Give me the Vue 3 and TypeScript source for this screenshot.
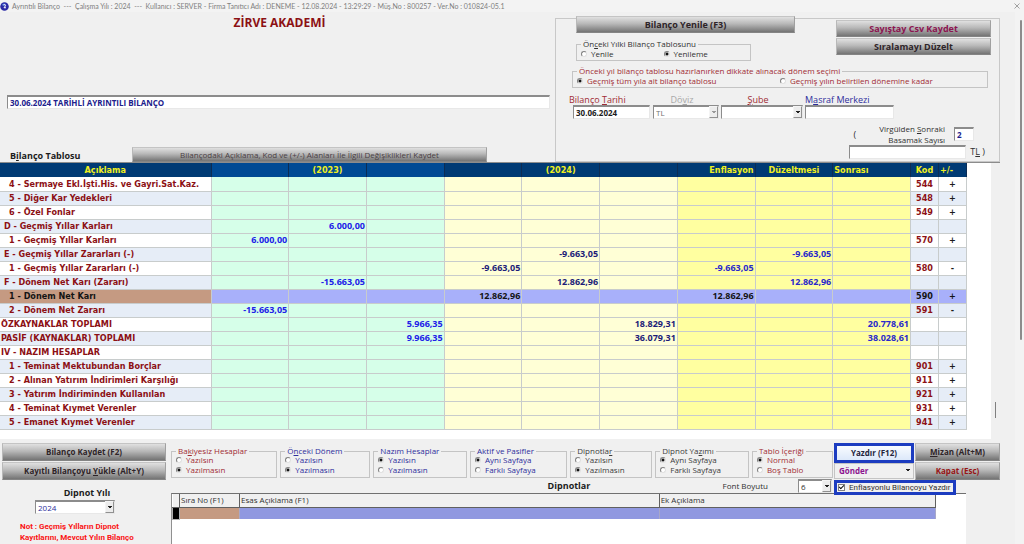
<script setup lang="ts">
import { ref } from 'vue'

interface Row {
  label: string
  level: 0 | 1 | 2
  code?: string
  sign?: string
  values?: Record<number, string>
  selected?: boolean
}

interface OptionGroup {
  id: string
  before: string
  key: string
  after: string
  options: string[]
  picked: number
  tone: 'red' | 'blue' | 'dark'
  size: number
}

const columns = ['', '(2023)', '', '', '(2024)', '', 'Enflasyon', 'Düzeltmesi', 'Sonrası']

const rows: Row[] = [
  { label: '4 - Sermaye Ekl.İşti.His. ve Gayri.Sat.Kaz.', level: 2, code: '544', sign: '+' },
  { label: '5 - Diğer Kar Yedekleri', level: 2, code: '548', sign: '+' },
  { label: '6 - Özel Fonlar', level: 2, code: '549', sign: '+' },
  { label: 'D - Geçmiş Yıllar Karları', level: 1, values: { 1: '6.000,00' } },
  { label: '1 - Geçmiş Yıllar Karları', level: 2, code: '570', sign: '+', values: { 0: '6.000,00' } },
  { label: 'E - Geçmiş Yıllar Zararları (-)', level: 1, values: { 4: '-9.663,05', 7: '-9.663,05' } },
  { label: '1 - Geçmiş Yıllar Zararları (-)', level: 2, code: '580', sign: '-', values: { 3: '-9.663,05', 6: '-9.663,05' } },
  { label: 'F - Dönem Net Karı (Zararı)', level: 1, values: { 1: '-15.663,05', 4: '12.862,96', 7: '12.862,96' } },
  { label: '1 - Dönem Net Karı', level: 2, code: '590', sign: '+', values: { 3: '12.862,96', 6: '12.862,96' }, selected: true },
  { label: '2 - Dönem Net Zararı', level: 2, code: '591', sign: '-', values: { 0: '-15.663,05' } },
  { label: 'ÖZKAYNAKLAR TOPLAMI', level: 0, values: { 2: '5.966,35', 5: '18.829,31', 8: '20.778,61' } },
  { label: 'PASİF (KAYNAKLAR) TOPLAMI', level: 0, values: { 2: '9.966,35', 5: '36.079,31', 8: '38.028,61' } },
  { label: 'IV - NAZIM HESAPLAR', level: 0 },
  { label: '1 - Teminat Mektubundan Borçlar', level: 2, code: '901', sign: '+' },
  { label: '2 - Alınan Yatırım İndirimleri Karşılığı', level: 2, code: '911', sign: '+' },
  { label: '3 - Yatırım İndiriminden Kullanılan', level: 2, code: '921', sign: '+' },
  { label: '4 - Teminat Kıymet Verenler', level: 2, code: '931', sign: '+' },
  { label: '5 - Emanet Kıymet Verenler', level: 2, code: '941', sign: '+' },
]

const groups = ref<OptionGroup[]>([
  { id: 'bakiyesiz', before: 'Ba', key: 'k', after: 'iyesiz Hesaplar', options: ['Yazılsın', 'Yazılmasın'], picked: 1, tone: 'red', size: 107 },
  { id: 'onceki', before: 'Ö', key: 'n', after: 'ceki Dönem', options: ['Yazılsın', 'Yazılmasın'], picked: 1, tone: 'blue', size: 89 },
  { id: 'nazim', before: 'Nazım Hesaplar', key: '', after: '', options: ['Yazılsın', 'Yazılmasın'], picked: 0, tone: 'blue', size: 93 },
  { id: 'aktif', before: 'Aktif ve Pasifler', key: '', after: '', options: ['Aynı Sayfaya', 'Farklı Sayfaya'], picked: 0, tone: 'blue', size: 97 },
  { id: 'dipnotlar', before: 'Dipnotla', key: 'r', after: '', options: ['Yazılsın', 'Yazılmasın'], picked: 1, tone: 'dark', size: 80 },
  { id: 'yazim', before: 'Dipnot Ya', key: 'z', after: 'ımı', options: ['Aynı Sayfaya', 'Farklı Sayfaya'], picked: 0, tone: 'dark', size: 93 },
  { id: 'icerik', before: 'Tablo İ', key: 'ç', after: 'eriği', options: ['Normal', 'Boş Tablo'], picked: 0, tone: 'red', size: 79 },
])

const heading = ref('30.06.2024 TARİHLİ AYRINTILI BİLANÇO')
const balanceDate = ref('30.06.2024')
const digits = ref('2')
const costCenter = ref('')
const unit = ref('')
const previous = ref('yenileme')
const period = ref('tum')
const inflation = ref(true)

const band = (index: number) => (index < 3 ? 'past' : index < 6 ? 'current' : 'inflated')
</script>

<template>
  <div class="window">
    <header class="titlebar">
      <svg class="logo" viewBox="0 0 18 18" aria-hidden="true">
        <circle cx="9" cy="9" r="8.5" fill="#2b2aa5" />
        <path d="M4 4.5Q8 1.5 12 4L7 8Q4 8 4 4.5Z" fill="#4d78d8" />
        <path d="M7 5.5Q12 4.5 11 7.5L8 11.5H12" fill="none" stroke="#fff" stroke-width="2" />
      </svg>
      <span class="caption">Ayrıntılı Bilanço &nbsp;---&nbsp; Çalışma Yılı : 2024 &nbsp;---&nbsp; Kullanıcı : SERVER - Firma Tanıtıcı Adı : DENEME - 12.08.2024 - 13:29:29 - Müş.No : 800257 - Ver.No : 010824-05.1</span>
      <button class="close" type="button" aria-label="Kapat">
        <svg viewBox="0 0 6 6"><path d="M.5.5l5 5M5.5.5l-5 5" stroke="#8c8c8c" stroke-width=".8" /></svg>
      </button>
    </header>

    <div class="body">
      <main class="content">
        <section class="top">
          <div class="intro">
            <h1>ZİRVE AKADEMİ</h1>
            <input v-model="heading" class="box heading" type="text" aria-label="Başlık" />
            <div class="tableBar">
              <h2>B<u>i</u>lanço Tablosu</h2>
              <button class="btn save" type="button">Bilançodaki Açıklama, Kod ve (+/-) Alanları İle İlgili Değişiklikleri Kaydet</button>
            </div>
          </div>

          <div class="params">
            <div class="paramsTop">
              <div class="renew">
                <button class="btn big" type="button">Bilanço Yenile (F3)</button>
                <fieldset class="frame previous">
                  <legend>Ön<u>c</u>eki Yılki Bilanço Tablosunu</legend>
                  <div class="pair">
                    <label class="radio"><input v-model="previous" type="radio" value="yenile" />Yenile</label>
                    <label class="radio"><input v-model="previous" type="radio" value="yenileme" />Yenileme</label>
                  </div>
                </fieldset>
              </div>
              <div class="extra">
                <button class="btn big plum" type="button">Sayıştay Csv Kaydet</button>
                <button class="btn big" type="button">Sıralamayı Düzelt</button>
              </div>
            </div>

            <fieldset class="frame period red">
              <legend>Önceki yıl bilanço tablosu hazırlanırken dikkate alınacak dönem seçimi</legend>
              <div class="pair">
                <label class="radio"><input v-model="period" type="radio" value="tum" />Geçmiş tüm yıla ait bilanço tablosu</label>
                <label class="radio"><input v-model="period" type="radio" value="belirtilen" />Geçmiş yılın belirtilen dönemine kadar</label>
              </div>
            </fieldset>

            <div class="fields">
              <div class="field">
                <label class="red" for="tarih">Bilanço <u>T</u>arihi</label>
                <input id="tarih" v-model="balanceDate" class="box date" type="text" />
              </div>
              <div class="field middle">
                <label class="faint" for="doviz">Dö<u>v</u>iz</label>
                <div class="combo off"><select id="doviz" class="box" disabled><option>TL</option></select></div>
              </div>
              <div class="field middle">
                <label class="red" for="sube"><u>Ş</u>ube</label>
                <div class="combo"><select id="sube" class="box"><option></option></select></div>
              </div>
              <div class="field">
                <label class="blue" for="masraf">M<u>a</u>sraf Merkezi</label>
                <input id="masraf" v-model="costCenter" class="box" type="text" />
              </div>
            </div>

            <div class="precision">
              <div class="precisionRow">
                <span>(</span>
                <label for="basamak">Virgülden <u>S</u>onraki<br />Basamak Sayısı</label>
                <input id="basamak" v-model="digits" class="box digits" type="text" />
              </div>
              <div class="unitRow">
                <input id="birim" v-model="unit" class="box unit" type="text" />
                <label for="birim">T<u>L</u> )</label>
              </div>
            </div>
          </div>
        </section>

        <section class="sheet">
          <div class="sheetArea">
            <table class="ledger">
              <colgroup>
                <col class="cLabel" />
                <col v-for="(c, i) in columns" :key="i" />
                <col class="cNarrow" />
                <col class="cNarrow" />
              </colgroup>
              <thead>
                <tr>
                  <th>Açıklama</th>
                  <th v-for="(c, i) in columns" :key="i" :class="[band(i), { end: i === 6, start: i === 8 }]">{{ c }}</th>
                  <th>Kod</th>
                  <th class="start">+/-</th>
                </tr>
              </thead>
              <tbody>
                <tr v-for="row in rows" :key="row.label" :class="{ selected: row.selected }">
                  <td :class="['name', 'level' + row.level]">{{ row.label }}</td>
                  <td v-for="(c, i) in columns" :key="i" :class="['num', band(i)]">{{ row.values?.[i] }}</td>
                  <td class="code">{{ row.code }}</td>
                  <td class="sign">{{ row.sign }}</td>
                </tr>
              </tbody>
            </table>
          </div>
          <div class="sheetScroll"><span class="thumb"></span></div>
        </section>

        <section class="bottom">
          <aside class="side">
            <button class="btn" type="button">Bilanço Kaydet (F2)</button>
            <button class="btn" type="button">Kayıtlı Bilançoyu <u>Y</u>ükle (Alt+Y)</button>
            <label class="sub" for="yil">Dipnot Yılı</label>
            <div class="combo year"><select id="yil" class="box"><option>2024</option></select></div>
            <p class="note">Not : Geçmiş Yılların Dipnot<br />Kayıtlarını, Mevcut Yılın Bilanço</p>
          </aside>

          <div class="work">
            <div class="controls">
              <div class="options">
                <div class="groups">
                  <fieldset v-for="g in groups" :key="g.id" :class="['frame', g.tone]" :style="{ flexGrow: g.size }">
                    <legend>{{ g.before }}<u v-if="g.key">{{ g.key }}</u>{{ g.after }}</legend>
                    <label v-for="(o, i) in g.options" :key="o" class="radio">
                      <input v-model="g.picked" type="radio" :name="g.id" :value="i" />{{ o }}
                    </label>
                  </fieldset>
                </div>
                <div class="notesBar">
                  <h2>Dipnotlar</h2>
                  <div class="fontSize">
                    <label for="boyut">Font Boyutu</label>
                    <div class="combo"><select id="boyut" class="box"><option>6</option></select></div>
                  </div>
                </div>
              </div>

              <div class="actions">
                <div class="output">
                  <button class="print" type="button">Yazdır (F12)</button>
                  <div class="combo send"><select aria-label="Gönder"><option>Gönder</option></select></div>
                </div>
                <div class="leave">
                  <button class="btn" type="button"><u>M</u>izan (Alt+M)</button>
                  <button class="btn crimson" type="button">Kapat (Esc)</button>
                </div>
                <label class="inflation"><input v-model="inflation" type="checkbox" />Enflasyonlu Bilançoyu Yazdır</label>
              </div>
            </div>

            <div class="notes">
              <table>
                <colgroup>
                  <col class="nMark" />
                  <col class="nNo" />
                  <col class="nMain" />
                  <col />
                </colgroup>
                <thead>
                  <tr><th></th><th>Sıra No (F1)</th><th>Esas Açıklama (F1)</th><th>Ek Açıklama</th></tr>
                </thead>
                <tbody>
                  <tr><td class="mark"></td><td class="no"></td><td></td><td></td></tr>
                </tbody>
              </table>
            </div>
          </div>
        </section>
      </main>
      <div class="pageScroll"><span class="thumb"></span></div>
    </div>
  </div>
</template>

<style>
html,
body {
  margin: 0;
  background: #f0f0f0;
}
</style>

<style scoped>
.window {
  display: flex;
  flex-direction: column;
  height: 100vh;
  overflow: hidden;
  background: #f0f0f0;
  color: #303030;
  font: 8px/10px 'Open Sans', 'Noto Sans', sans-serif;
}
.window *,
.window *::after {
  box-sizing: border-box;
}
button,
input,
select {
  margin: 0;
  font: inherit;
  color: inherit;
}
h1,
h2,
p {
  margin: 0;
}
u {
  text-underline-offset: 1px;
}
.red {
  color: #a02c34;
}
.blue {
  color: #2e2e9c;
}
.dark {
  color: #3c3c3c;
}
.faint {
  color: #a8a8a8;
}

.titlebar {
  display: flex;
  align-items: center;
  height: 12px;
  padding-right: 4px;
  background: #f3f3f3;
  color: #808080;
  font-family: Lato, sans-serif;
  font-size: 7px;
  white-space: nowrap;
}
.logo {
  width: 9px;
  height: 9px;
  margin-right: 3px;
}
.caption {
  flex: 1;
}
.close {
  display: flex;
  padding: 0;
  border: 0;
  background: none;
}
.close svg {
  width: 6px;
  height: 6px;
}

.body {
  display: flex;
  flex: 1;
  min-height: 0;
}
.content {
  display: flex;
  flex: 1;
  flex-direction: column;
  min-width: 0;
  padding-right: 15px;
}
.pageScroll {
  width: 9px;
  padding: 8px 2px 0 5px;
  background: #f3f3f3;
}
.pageScroll .thumb {
  display: block;
  height: 61%;
  border-radius: 1px;
  background: #8c8c8c;
}

.btn {
  display: block;
  width: 100%;
  padding: 0;
  border: 1px solid #a8a8a8;
  border-color: #c4c4c4 #a0a0a0 #848484 #b8b8b8;
  background: linear-gradient(#e0e0e0, #b8b8b8 45%, #747474);
  color: #2e2428;
  font-weight: 700;
  white-space: nowrap;
}
.big {
  height: 17px;
  font-size: 9px;
}
.plum {
  color: #8c1450;
}
.crimson {
  color: #981414;
}
.box {
  display: block;
  width: 100%;
  height: 14px;
  padding: 0 2px;
  border: 1px solid #e8e8e8;
  border-top: 2px solid #8c8c8c;
  border-left: 1px solid #8c8c8c;
  border-radius: 0;
  outline: 0;
  background: #fff;
}
.combo {
  display: grid;
  align-items: center;
}
.combo select {
  grid-area: 1 / 1;
  appearance: none;
  opacity: 1;
}
.combo::after {
  content: '';
  grid-area: 1 / 1;
  justify-self: end;
  width: 9px;
  height: 12px;
  margin-right: 1px;
  border: 1px solid #989898;
  border-color: #f4f4f4 #909090 #909090 #f4f4f4;
  background: linear-gradient(#222, #222) center 4px / 4px 1px no-repeat, linear-gradient(#222, #222) center 5px / 2px 1px no-repeat, #ececec;
  pointer-events: none;
}
.combo.off {
  color: #707070;
}
.combo.off::after {
  background: linear-gradient(#999, #999) center 4px / 4px 1px no-repeat, linear-gradient(#999, #999) center 5px / 2px 1px no-repeat, #ececec;
}

.frame {
  min-width: 0;
  margin: 0;
  padding: 0 4px;
  border: 1px solid #c4c4c4;
}
.frame legend {
  padding: 0 2px;
  line-height: 8px;
  white-space: nowrap;
}
.radio {
  display: flex;
  align-items: center;
  gap: 4px;
  white-space: nowrap;
}
.radio input {
  flex: none;
  appearance: none;
  width: 6px;
  height: 6px;
  border: 1px solid #8a8a8a;
  border-color: #808080 #e0e0e0 #e0e0e0 #808080;
  border-radius: 50%;
  background: #fff;
}
.radio input:checked {
  background: radial-gradient(#111 0 1px, #fff 2px);
}
.pair {
  display: grid;
  grid-template-columns: 1fr 1fr;
  height: 12px;
}

.top {
  display: flex;
  height: 150px;
}
.intro {
  display: flex;
  flex: 1;
  flex-direction: column;
  min-width: 0;
}
h1 {
  margin-top: 3px;
  padding-left: 4px;
  color: #8c1014;
  font-size: 12px;
  line-height: 16px;
  text-align: center;
}
h2 {
  color: #1c1c1c;
  font-size: 9px;
  line-height: 12px;
}
.heading {
  width: auto;
  margin: 64px 5px 0 7px;
  color: #20208c;
  font-weight: 700;
}
.tableBar {
  display: flex;
  align-items: flex-end;
  margin: auto 68px 0 10px;
}
.tableBar h2 {
  width: 122px;
}
.save {
  flex: 1;
  height: 15px;
  color: #4a4044;
  font-weight: 400;
}
.params {
  width: 445px;
  margin-top: 6px;
  padding: 0 8px 0 13px;
  border: 1px solid #c8c8c8;
}
.paramsTop {
  display: flex;
  align-items: flex-start;
  justify-content: space-between;
}
.renew {
  width: 226px;
  margin-top: -3px;
  padding-left: 7px;
}
.previous {
  width: 175px;
  margin-top: 7px;
}
.extra {
  display: grid;
  gap: 1px;
  width: 155px;
  margin-top: 1px;
}
.period {
  margin: 6px 3px 0;
}
.fields {
  display: grid;
  grid-template-columns: 82px 66px 82px 89px;
  gap: 2px;
  margin-top: 6px;
}
.field label {
  display: block;
  font-size: 9px;
  line-height: 11px;
}
.middle label {
  padding-right: 8px;
  text-align: center;
}
.date {
  width: 77px;
  margin-left: 4px;
  color: #1c1c1c;
  font-weight: 700;
}
.precision {
  display: grid;
  justify-items: end;
  margin-top: 4px;
}
.precisionRow {
  display: flex;
  align-items: center;
  gap: 9px;
  margin-right: 17px;
  line-height: 11px;
  text-align: right;
}
.precisionRow span {
  margin-right: 14px;
  font-size: 9px;
}
.digits {
  width: 20px;
  color: #20208c;
  font-weight: 700;
}
.unitRow {
  display: flex;
  align-items: center;
  gap: 4px;
  margin-right: 6px;
  font-size: 9px;
}
.unit {
  width: 117px;
}

.sheet {
  display: flex;
  height: 277px;
  border-top: 1px solid #8c8c8c;
}
.sheetArea {
  flex: 1;
  padding-right: 24px;
  background: #fff;
}
.sheetScroll {
  display: flex;
  align-items: flex-end;
  width: 9px;
  padding: 0 4px 21px;
}
.sheetScroll .thumb {
  width: 1px;
  height: 16px;
  background: #808080;
}
.ledger {
  width: 100%;
  border-collapse: collapse;
  table-layout: fixed;
  font: 700 9px/12px 'DejaVu Sans Condensed', 'DejaVu Sans', sans-serif;
  white-space: nowrap;
}
.cLabel {
  width: 211px;
}
.cNarrow {
  width: 28px;
}
.ledger th {
  height: 14px;
  padding: 0 1px;
  border-right: 1px solid #0c2c54;
  background: #003a74;
  color: #f0f020;
}
.ledger th.past {
  background: #004a94;
}
.ledger th.end {
  text-align: right;
}
.ledger th.start {
  text-align: left;
}
.ledger td {
  height: 14px;
  padding: 0 1px;
  border: solid #c8cccc;
  border-width: 0 1px 1px 0;
  color: #8c1014;
}
.ledger tr:nth-child(even) td {
  background: #e6edf7;
}
.ledger td.level1 {
  padding-left: 4px;
}
.ledger td.level2 {
  padding-left: 9px;
}
.ledger td.num {
  font-family: 'Open Sans', 'Noto Sans', sans-serif;
  text-align: right;
}
.ledger tbody td.past {
  background: #d6ffe9;
  color: #2020e8;
}
.ledger tbody td.current {
  background: #ffffd6;
  color: #1c1c78;
}
.ledger tbody td.inflated {
  background: #ffffa0;
  color: #2828cc;
}
.ledger td.code,
.ledger td.sign {
  text-align: center;
}
.ledger td.sign {
  color: #1c1c1c;
}
.ledger tbody .selected td {
  background: #a8b0fa;
  color: #141414;
}
.ledger tbody .selected .name {
  background: #c59a82;
}

.bottom {
  display: flex;
  flex: 1;
  gap: 5px;
  min-height: 0;
  padding: 4px 0 0 2px;
}
.side {
  display: flex;
  flex-direction: column;
  align-items: center;
  gap: 1px;
  width: 164px;
}
.side .btn,
.leave .btn {
  height: 18px;
}
.sub {
  margin-top: 5px;
  padding-left: 6px;
  color: #1c1c1c;
  font-size: 9px;
  font-weight: 700;
  line-height: 13px;
}
.year {
  width: 80px;
  margin-right: 18px;
  color: #2e2e9c;
}
.note {
  align-self: flex-start;
  margin: 6px 0 0 18px;
  color: #fa1414;
  font-family: Roboto, sans-serif;
  font-weight: 700;
  line-height: 11px;
  white-space: nowrap;
}
.work {
  display: flex;
  flex: 1;
  flex-direction: column;
  min-width: 0;
}
.controls {
  display: flex;
  gap: 1px;
}
.options {
  display: flex;
  flex: 1;
  flex-direction: column;
  min-width: 0;
}
.groups {
  display: flex;
  gap: 3px;
  margin-top: 4px;
}
.groups .frame {
  flex-basis: 0;
  padding-bottom: 2px;
}
.groups .radio {
  height: 10px;
}
.notesBar {
  display: grid;
  grid-template-columns: 1fr auto 1fr;
  align-items: center;
  margin-top: 1px;
}
.notesBar h2 {
  grid-column: 2;
  margin-left: 134px;
}
.fontSize {
  display: flex;
  align-items: center;
  justify-content: flex-end;
  gap: 30px;
  padding-right: 1px;
}
.fontSize .combo {
  width: 34px;
}
.actions {
  display: grid;
  grid-template-columns: 80px 85px;
  align-content: start;
  column-gap: 1px;
}
.output,
.leave {
  display: grid;
  align-content: start;
}
.leave {
  gap: 1px;
}
.print {
  height: 20px;
  padding: 0;
  border: 3px solid #1c3cc0;
  background: linear-gradient(#f8fbff, #dce8fa);
  color: #24243c;
  font-weight: 700;
}
.send {
  height: 16px;
  border: 1px solid #c4c4c4;
  color: #8c1490;
  font-weight: 700;
}
.send select {
  width: 100%;
  padding: 0 4px;
  border: 0;
  outline: 0;
  background: transparent;
}
.send::after {
  border: 0;
  background-color: transparent;
}
.inflation {
  position: relative;
  z-index: 1;
  display: flex;
  grid-column: 1 / -1;
  align-items: center;
  justify-self: start;
  gap: 4px;
  width: 122px;
  height: 15px;
  padding: 0 1px;
  border: 3px solid #1c3cc0;
  background: #f0f0f0;
  font-family: Roboto, sans-serif;
  white-space: nowrap;
}
.inflation input {
  position: relative;
  flex: none;
  appearance: none;
  width: 7px;
  height: 7px;
  border: 1px solid #808080;
  background: #fff;
}
.inflation input:checked::after {
  content: '';
  position: absolute;
  top: 0;
  left: 0;
  width: 5px;
  height: 3px;
  border: solid #111;
  border-width: 0 0 1px 1px;
  transform: rotate(-45deg);
}
.notes {
  flex: 1;
  margin: -2px 34px 0 0;
  padding-right: 30px;
  border-top: 1px solid #707070;
  border-left: 1px solid #909090;
  background: #fff;
}
.notes table {
  width: 100%;
  border-collapse: collapse;
  table-layout: fixed;
}
.nMark {
  width: 7px;
}
.nNo {
  width: 60px;
}
.nMain {
  width: 55%;
}
.notes th {
  height: 13px;
  padding: 0 1px;
  border: solid #606060;
  border-width: 0 1px 1px 0;
  background: #f0f0f0;
  font-weight: 400;
  text-align: left;
}
.notes td {
  height: 12px;
  padding: 0;
  border-right: 1px solid #a8a8c8;
  background: #9098e0;
}
.notes td.no {
  background: #c59a82;
}
.notes td.mark {
  border: 1px solid #b0b0b0;
  background: #000;
}
</style>
